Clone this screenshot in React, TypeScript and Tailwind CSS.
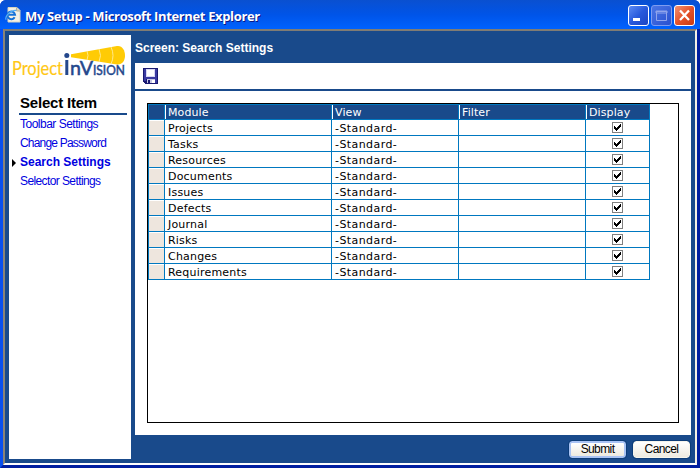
import React from 'react';

const modules = ['Projects', 'Tasks', 'Resources', 'Documents', 'Issues', 'Defects', 'Journal', 'Risks', 'Changes', 'Requirements'];

const links = [
  { label: 'Toolbar Settings', cls: 'tracking-[-0.5px]' },
  { label: 'Change Password', cls: 'tracking-[-0.8px]' },
  { label: 'Search Settings', cls: 'font-bold tracking-[0px]', active: true },
  { label: 'Selector Settings', cls: 'tracking-[-0.6px]' },
];

function IeIcon() {
  return (
    <svg width="16" height="17" viewBox="0 0 16 17" className="block">
      <path d="M3 .5h9l3 3V15H3z" fill="#f4f1e6" stroke="#d8d4c0" />
      <path d="M11.5 .5v3.500H15" fill="#d8d4c0" stroke="#a9a58e" strokeWidth=".8" />
      <path d="M9.600 10.200A3.800 3.800 0 1 1 10 7.700H3.400" fill="none" stroke="#1672d8" strokeWidth="2" />
      <path d="M1.200 12.600C-.6 10 5 3 11.200 3.400" fill="none" stroke="#55aef5" strokeWidth="1.200" />
    </svg>
  );
}

function Logo() {
  return (
    <svg width="119" height="41" viewBox="0 0 119 41" className="block" fontFamily="Lato, sans-serif">
      <path d="M59 9.200 105 1c5-.8 8 4 8 9.500s-3 9.500-8 9L59 12.200z" fill="#ffcb05" />
      <path d="M75 6q2 4.500 0 9M87 4q3 6.500 0 13M99 2q4 8.500 0 17" fill="none" stroke="#ffe98c" strokeWidth="1" />
      <circle cx="54.800" cy="10.500" r="2.500" fill="#24478c" />
      <text x="0" y="30" fontSize="19" fill="#ffc815" stroke="#ffc815" strokeWidth=".2" textLength="51" lengthAdjust="spacingAndGlyphs">Project</text>
      <path d="M53.300 15h3v15h-3z" fill="#24478c" />
      <text x="58" y="30" fontSize="19" fill="#24478c" stroke="#24478c" strokeWidth=".5" textLength="23" lengthAdjust="spacingAndGlyphs">nV</text>
      <text x="81" y="30" fontSize="14" fill="#24478c" stroke="#24478c" strokeWidth=".5" textLength="32" lengthAdjust="spacingAndGlyphs">ISION</text>
    </svg>
  );
}

function Disk() {
  return (
    <svg width="15" height="16" viewBox="0 0 15 16" shapeRendering="crispEdges" className="block">
      <path d="M0 0h15v16H2L0 14z" fill="#191970" />
      <path d="M1 1h2v12H1zM12 1h2v14h-2zM3 9h9v2H3z" fill="#3a3aa0" />
      <path d="M3 1h9v8H3z" fill="#d8d8f4" />
      <path d="M4 2h7v6H4z" fill="#fff" />
      <path d="M4 11h8v4H4z" fill="#c8c8e4" />
      <path d="M9 12h3v3H9z" fill="#fff" />
      <path d="M5 12h2v3H5z" fill="#191970" />
    </svg>
  );
}

function Check() {
  return (
    <svg width="11" height="11" viewBox="0 0 11 11" shapeRendering="crispEdges" className="block">
      <path d="M.5.5h10v10H.5z" fill="#fff" stroke="#808080" />
      <path d="M2 4h1v1h1v1h1V5h1V4h1V3h1V2h1v3H8v1H7v1H6v1H5v1H4V8H3V7H2z" fill="#000" />
    </svg>
  );
}

function CaptionButton({ kind }: { kind: 'min' | 'max' | 'close' }) {
  const look = {
    min: 'border-white bg-linear-to-br from-[#5c8af4] via-[#2859dc] to-[#1c46c4]',
    max: 'border-[#7e9cf0] bg-linear-to-br from-[#4b75e6] to-[#2a50cf]',
    close: 'border-white bg-linear-to-br from-[#f09070] via-[#e5522a] to-[#c83a10]',
  }[kind];
  return (
    <div className={`h-[21px] w-[21px] rounded-[3px] border ${look}`}>
      <svg width="19" height="19" viewBox="0 0 19 19" className="block">
        {kind === 'min' && <path d="M4 12h7v3H4z" fill="#fff" />}
        {kind === 'max' && <path d="M4.500 5.500h10v9h-10zM4 5h11v2H4z" fill="none" stroke="#91a5ec" />}
        {kind === 'close' && <path d="M5 4.500l9 9.500M14 4.500l-9 9.500" stroke="#fff" strokeWidth="2.300" />}
      </svg>
    </div>
  );
}

const line = 'border-[#0078c0]';

export default function App() {
  return (
    <div className="flex h-[468px] w-[700px] flex-col overflow-hidden rounded-t-[6px] bg-[#0831d9] font-['Liberation_Sans',sans-serif] text-black">
      <header className="flex h-[29px] shrink-0 items-center bg-linear-to-b from-[#0a50d0] via-[#0054e8] to-[#0062ff] pl-[5px] pr-[5px] pt-[2px]">
        <IeIcon />
        <h1 className="ml-[4px] flex-1 whitespace-nowrap font-['Open_Sans',sans-serif] text-[13px] font-bold leading-[16px] tracking-[-0.36px] text-white [text-shadow:1px_1px_#0a1883]">
          My Setup - Microsoft Internet Explorer
        </h1>
        <div className="flex gap-[2px]">
          <CaptionButton kind="min" />
          <CaptionButton kind="max" />
          <CaptionButton kind="close" />
        </div>
      </header>

      <div className="flex flex-1 border-b-[3px] border-l-[3px] border-r-[3px] border-b-[#001ea0] border-l-[#0a50ee] border-r-[#001ea0]">
        <div className="flex flex-1 border-2 border-b-white border-l-[#8a8478] border-r-[#f4f0e4] border-t-[#807c74] bg-[#194a8b] pl-[4px] pt-[4px]">
          <aside className="mb-[4px] w-[122px] bg-white">
            <div className="pl-[3px] pt-[10px]"><Logo /></div>
            <h2 className="ml-[10px] mt-[8px] w-[108px] border-b-2 border-[#194a8b] pb-[2px] pl-px text-[15px] font-bold leading-[17px] tracking-[-0.2px]">Select Item</h2>
            <ul className="text-[12px] leading-[19px] text-[#0000e0]">
              {links.map((l) => (
                <li key={l.label} className="flex h-[19px] items-center pl-[3px]">
                  <span className={`mr-[4px] h-0 w-0 border-y-4 border-l-4 border-y-transparent ${l.active ? 'border-l-black' : 'border-l-transparent'}`} />
                  <span className={`whitespace-nowrap ${l.cls}`}>{l.label}</span>
                </li>
              ))}
            </ul>
          </aside>

          <main className="ml-[4px] flex w-[556px] flex-col">
            <div className="h-[28px] pt-[5px] text-[12px] font-bold leading-[16px] tracking-[0px] text-white">Screen: Search Settings</div>
            <div className="h-[26px] bg-white pl-[8px] pt-[5px]"><Disk /></div>
            <div className="mt-[2px] h-[344px] bg-white px-[12px] pt-[12px]">
              <div className="h-[320px] border border-black">
                <div className={`w-[502px] border-l border-t font-['DejaVu_Sans',sans-serif] text-[11px] leading-[17px] ${line}`}>
                  <div className="grid h-[15px] grid-cols-[16px_167px_127px_127px_64px] bg-[#194a8b] text-white">
                    {['', 'Module', 'View', 'Filter', 'Display'].map((h, i) => (
                      <div key={i} className={`h-[15px] border-b border-r ${line}`}>
                        <div className={`h-[14px] leading-[16px] tracking-[0.1px] ${i ? 'border-l border-white pl-[2px]' : ''}`}>{h}</div>
                      </div>
                    ))}
                  </div>
                  {modules.map((m) => (
                    <div key={m} className="grid h-[16px] grid-cols-[16px_167px_127px_127px_64px] grid-rows-[16px]">
                      <div className={`border-b border-r bg-[#eee6de] ${line}`}><div className="h-px bg-white" /></div>
                      <div className={`border-b border-r pl-[3px] tracking-[0.2px] ${line}`}>{m}</div>
                      <div className={`border-b border-r pl-[3px] tracking-[0.42px] ${line}`}>-Standard-</div>
                      <div className={`border-b border-r ${line}`} />
                      <div className={`flex justify-center border-b border-r pt-[2px] ${line}`}><Check /></div>
                    </div>
                  ))}
                </div>
              </div>
            </div>
            <div className="flex justify-end gap-[7px] pr-px pt-[6px] text-[12px]">
              <button className="h-[17px] w-[57px] rounded-[3px] border-2 border-[#a9c3f4] bg-linear-to-b from-white to-[#eeeae0] leading-[13px] tracking-[-0.6px] outline outline-1 outline-[#0c3c78]">Submit</button>
              <button className="h-[17px] w-[57px] rounded-[3px] border border-[#f6f4ec] bg-linear-to-b from-white to-[#eeeae0] leading-[15px] tracking-[-0.6px] outline outline-1 outline-[#0c3c78]">Cancel</button>
            </div>
          </main>
        </div>
      </div>
    </div>
  );
}
